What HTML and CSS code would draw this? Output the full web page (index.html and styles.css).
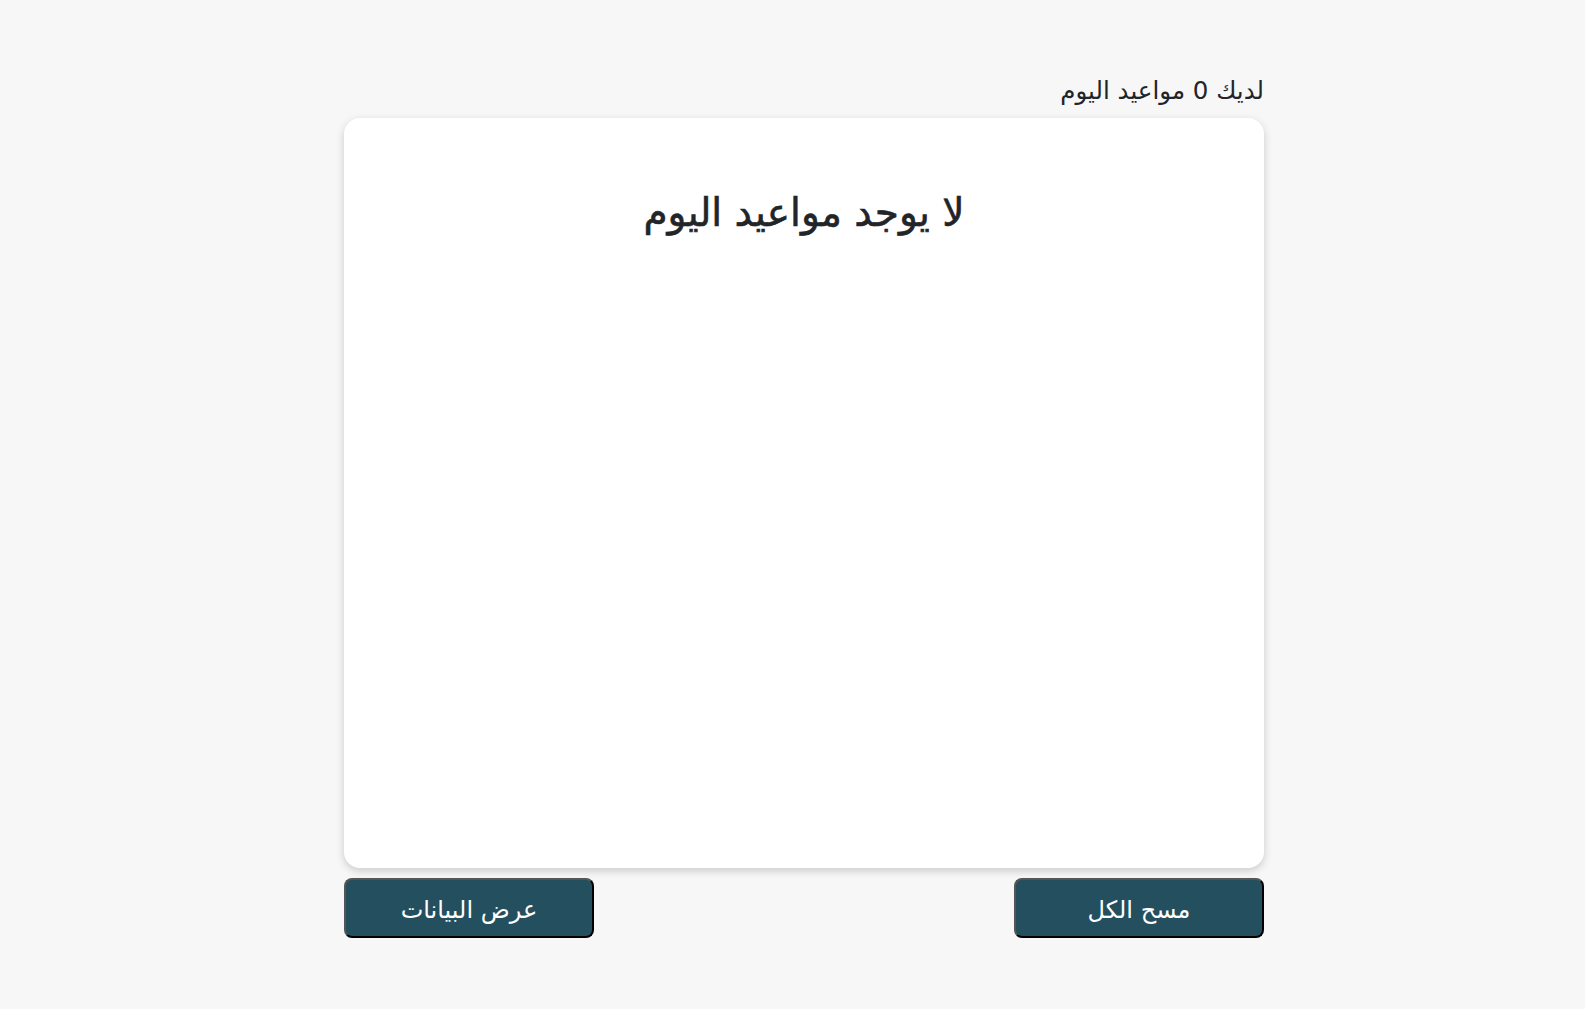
FILE: index.html
```
<!DOCTYPE html>
<html lang="ar" dir="rtl">
<head>
<meta charset="utf-8">
<link rel="stylesheet" href="styles.css">
</head>
<body>
<div class="page">
  <p class="count">لديك 0 مواعيد اليوم</p>
  <div class="card">
    <h1 class="empty">لا يوجد مواعيد اليوم</h1>
  </div>
  <div class="actions">
    <button class="btn">مسح الكل</button>
    <button class="btn">عرض البيانات</button>
  </div>
</div>
</body>
</html>
```
FILE: styles.css
```
html, body {
  margin: 0;
  padding: 0;
  background: #f7f7f7;
}
body {
  font-family: "DejaVu Sans", "Noto Sans", sans-serif;
  color: #212529;
  padding-left: 23px;
}
.page {
  width: 920px;
  margin: 0 auto;
  padding-top: 74px;
}
.count {
  margin: 0 0 10px 0;
  font-size: 24.5px;
  line-height: 34px;
  color: #212529;
}
.card {
  height: 750px;
  background: #fff;
  border-radius: 16px;
  box-shadow: 0 3px 8px rgba(0,0,0,0.18);
  padding-top: 67px;
  box-sizing: border-box;
}
.empty {
  margin: 0;
  text-align: center;
  font-size: 39px;
  font-weight: normal;
  line-height: 56px;
  color: #212529;
  -webkit-text-stroke: 0.6px #212529;
}
.actions {
  margin-top: 10px;
  display: flex;
  justify-content: space-between;
}
.btn {
  width: 250px;
  height: 60px;
  padding-top: 4px;
  background: #234f5f;
  color: #fff;
  font-family: "DejaVu Sans", "Noto Sans", sans-serif;
  font-size: 24px;
  border-radius: 8px;
  border: 2px solid;
  border-color: #555 #000 #000 #555;
}
```
